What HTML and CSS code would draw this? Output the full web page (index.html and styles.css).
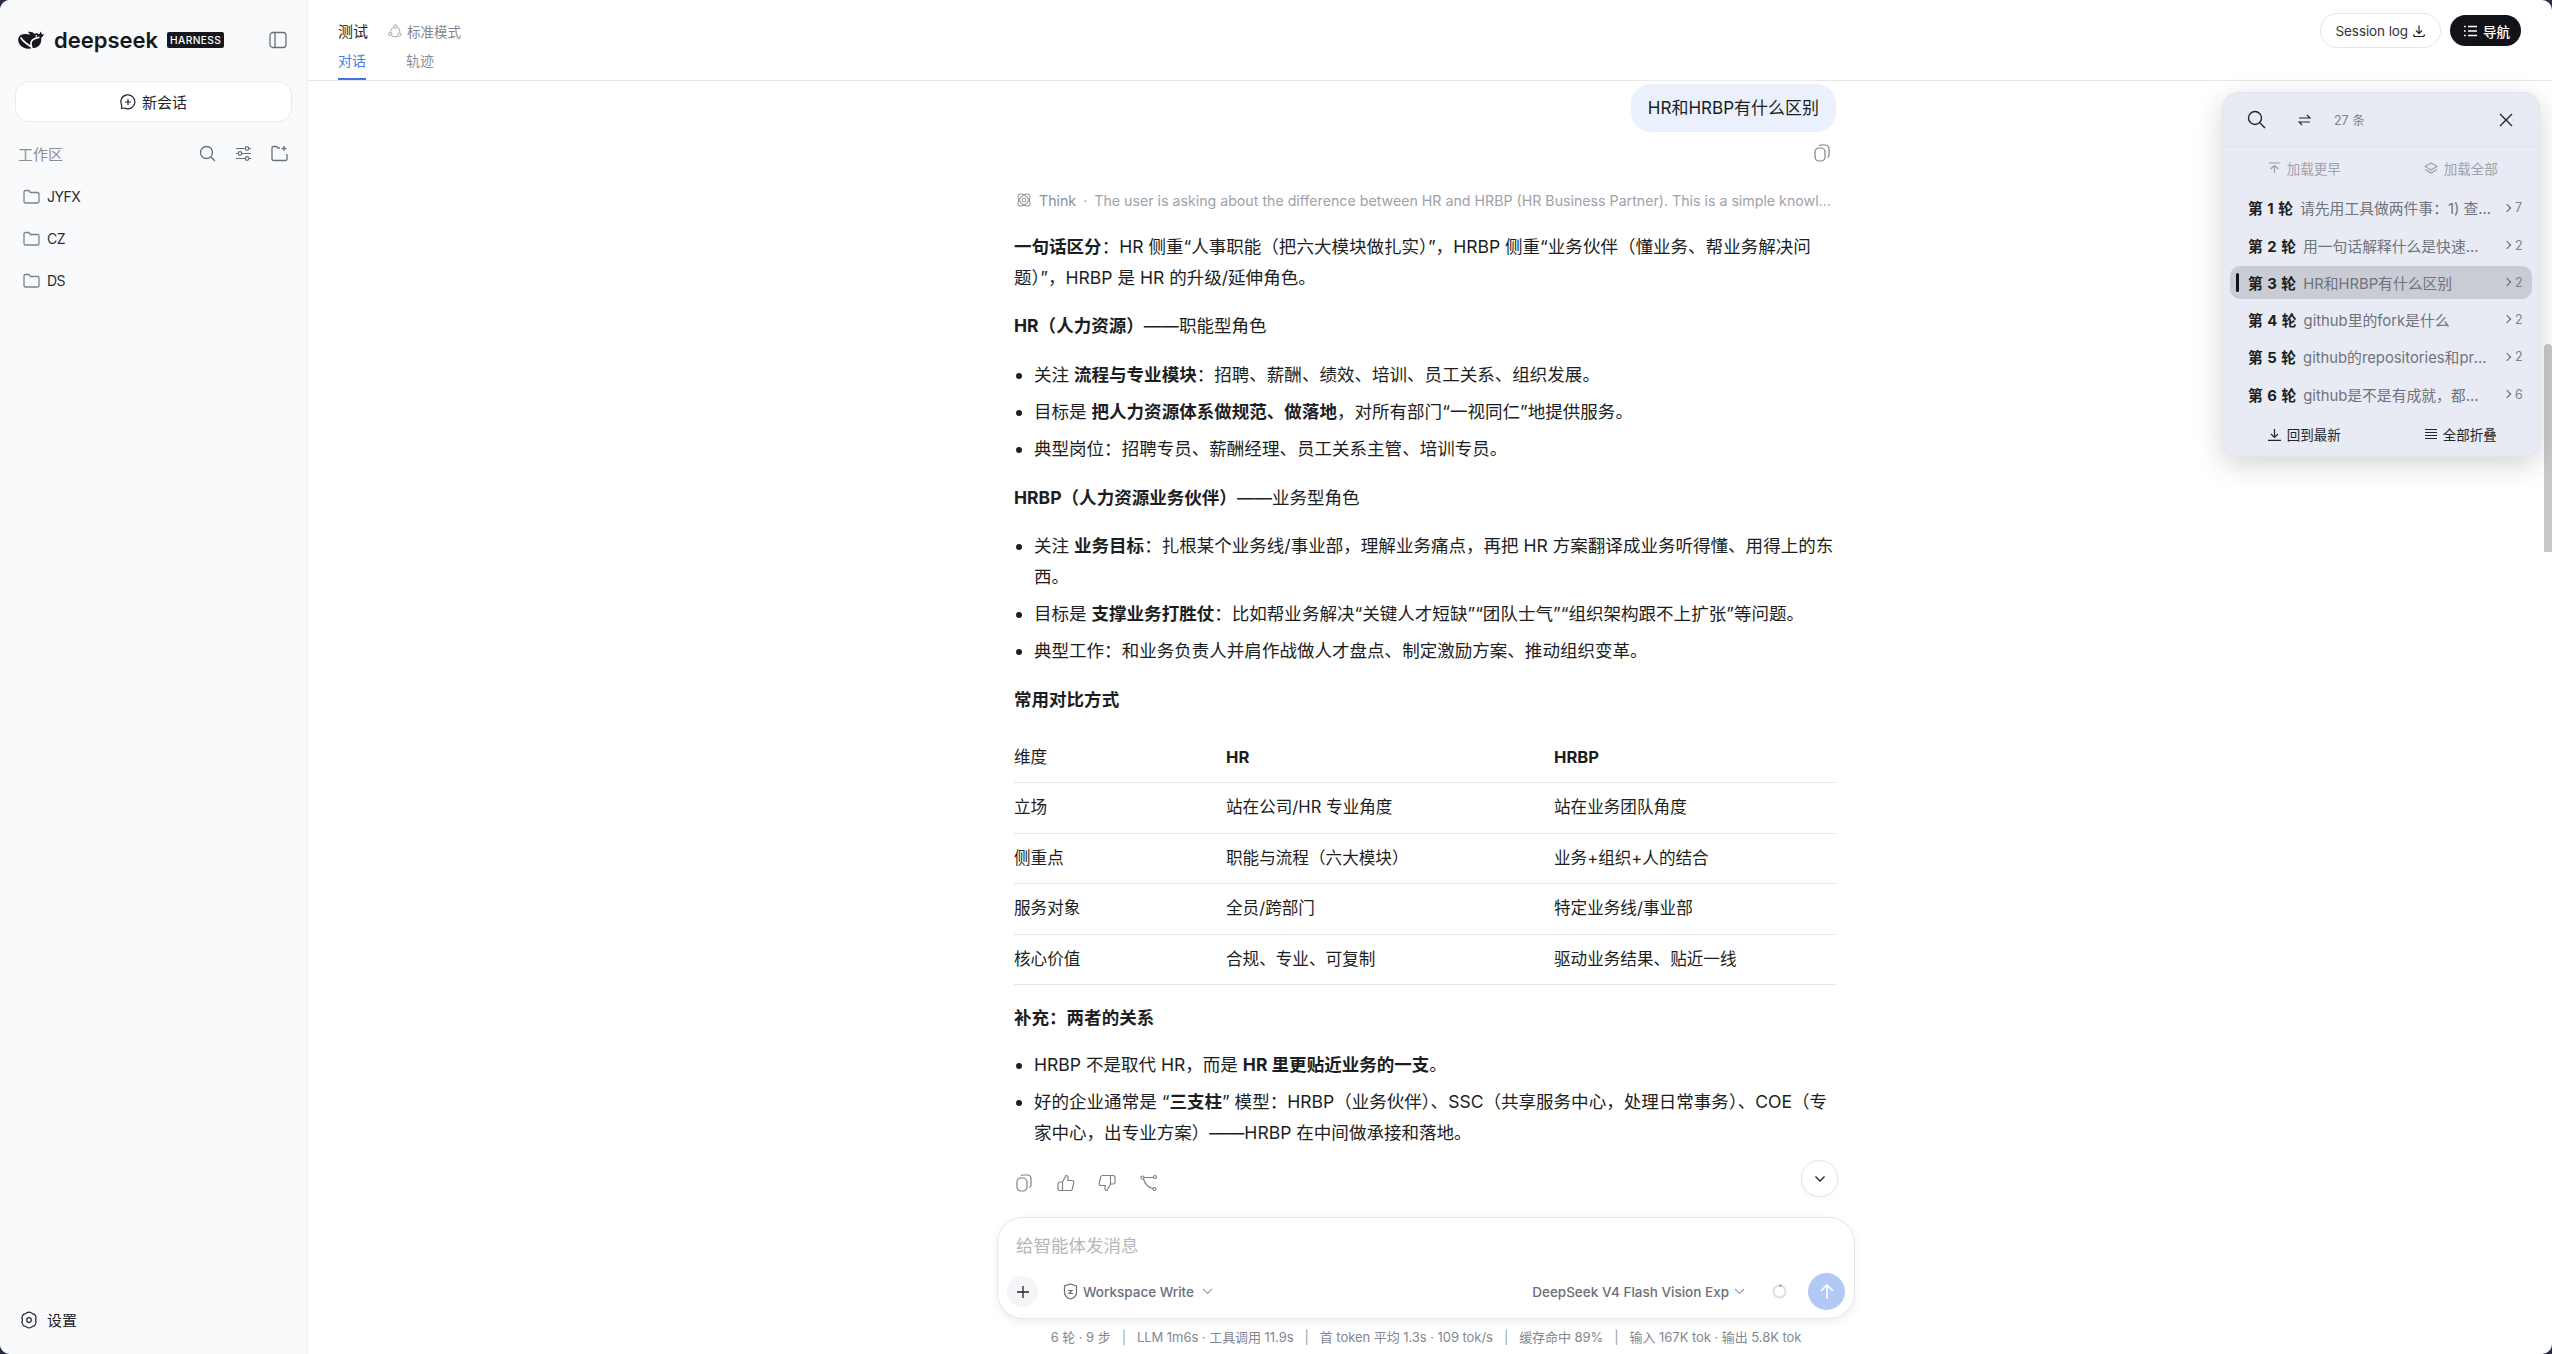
FILE: index.html
```html
<!DOCTYPE html>
<html lang="zh-CN">
<head>
	<meta charset="UTF-8">
	<title>DeepSeek Harness</title>
	<link rel="stylesheet" href="styles.css">
</head>
<body>
<div class="app">
	<aside class="side">
		<div class="brand">
			<svg class="whale" width="27" height="18" viewBox="0 0 27 18"><path fill="#16181d" d="M26.500 2.800c-.8.500-1.600.7-2.400.6-.3-.9-.8-1.900-1.500-2.900-.2 1.200-.7 2.100-1.400 2.800-1.300-1-3.100-1.300-4.800-.4C15.200 1.300 12.600.4 10 1c1 .8 1.700 1.700 2 2.700C9.200 2.700 5.400 2.500 2.800 4 .8 5.200 0 7.200.2 9.300c.3 4.300 4.200 8.200 9.600 8.400 1.700.1 3.100-.2 4.200-.8 3.800.5 7-1 8.600-4.700.6-1.500.9-3.600.5-5.300 1.500-.9 2.600-2.200 3-4.100z"/><path fill="none" stroke="#f9fafc" stroke-width="1.700" stroke-linecap="round" d="M3 7c2.500 3.800 5.800 6 10.800 9.300M13.800 16.300c-1.200-2.600-1.200-5.300.7-7.300 1.600-1.700 4-2.300 6.300-2.700"/><circle cx="18.300" cy="4.800" r=".9" fill="#f9fafc"/></svg>
			<span class="word">deepseek</span>
			<span class="badge">HARNESS</span>
			<svg class="collapse" width="18" height="18" viewBox="0 0 18 18" fill="none" stroke="#6b7078" stroke-width="1.300"><rect x="1" y="1.500" width="16" height="15" rx="3"/><path d="M6 1.500v15"/></svg>
		</div>
		<button class="new-chat">
			<svg width="16" height="16" viewBox="0 0 16 16" fill="none" stroke="#22252b" stroke-width="1.200"><path d="M4.500 14a7 7 0 1 0-2.800-2.800L1.500 14.500z" stroke-linejoin="round"/><path d="M8 5v6M5 8h6"/></svg>
			<span>新会话</span>
		</button>
		<div class="ws-head">
			<span class="ws-title">工作区</span>
			<div class="ws-tools">
				<svg width="17" height="17" viewBox="0 0 17 17" fill="none" stroke="#6b7078" stroke-width="1.300"><circle cx="7.500" cy="7.500" r="6"/><path d="M12 12l4 4"/></svg>
				<svg width="17" height="17" viewBox="0 0 17 17" fill="none" stroke="#6b7078" stroke-width="1.200"><path d="M1 3.500h9M14 3.500h2M1 8.500h2M7 8.500h9M1 13.500h9M14 13.500h2"/><circle cx="12" cy="3.500" r="1.800"/><circle cx="5" cy="8.500" r="1.800"/><circle cx="12" cy="13.500" r="1.800"/></svg>
				<svg width="17" height="17" viewBox="0 0 17 17" fill="none" stroke="#6b7078" stroke-width="1.300"><path d="M9 3H7L5.500 1.500H2.500a1.500 1.500 0 0 0-1.500 1.500v11a1.500 1.500 0 0 0 1.500 1.500h12a1.500 1.500 0 0 0 1.500-1.500V9"/><path d="M13 1v5M10.500 3.500h5"/></svg>
			</div>
		</div>
		<ul class="folders">
			<li><svg width="17" height="15" viewBox="0 0 17 15" fill="none" stroke="#7d828a" stroke-width="1.300"><path d="M1 3a1.500 1.500 0 0 1 1.500-1.500h3.300L7.500 3.500h7A1.500 1.500 0 0 1 16 5v7.500a1.500 1.500 0 0 1-1.500 1.500h-12A1.500 1.500 0 0 1 1 12.500z"/></svg>JYFX</li>
			<li><svg width="17" height="15" viewBox="0 0 17 15" fill="none" stroke="#7d828a" stroke-width="1.300"><path d="M1 3a1.500 1.500 0 0 1 1.500-1.500h3.300L7.500 3.500h7A1.500 1.500 0 0 1 16 5v7.500a1.500 1.500 0 0 1-1.500 1.500h-12A1.500 1.500 0 0 1 1 12.500z"/></svg>CZ</li>
			<li><svg width="17" height="15" viewBox="0 0 17 15" fill="none" stroke="#7d828a" stroke-width="1.300"><path d="M1 3a1.500 1.500 0 0 1 1.500-1.500h3.300L7.500 3.500h7A1.500 1.500 0 0 1 16 5v7.500a1.500 1.500 0 0 1-1.500 1.500h-12A1.500 1.500 0 0 1 1 12.500z"/></svg>DS</li>
		</ul>
		<div class="settings">
			<svg width="18" height="18" viewBox="0 0 18 18" fill="none" stroke="#2a2d33" stroke-width="1.300"><path d="M6.800 1.800c1.300-.8 3.100-.8 4.400 0l1.600 1c.4.200.9.300 1.400.3 1 .9 1.700 2.400 1.900 3.900-.3.400-.4.800-.4 1.300v1.400c0 .5.100.9.400 1.300-.2 1.500-.9 3-1.900 3.900-.5 0-1 .1-1.400.3l-1.600 1c-1.300.8-3.100.8-4.400 0l-1.600-1c-.4-.2-.9-.3-1.400-.3-1-.9-1.700-2.400-1.900-3.900.3-.4.400-.8.400-1.300V8.300c0-.5-.1-.9-.4-1.300.2-1.500.9-3 1.900-3.900.5 0 1-.1 1.400-.3z"/><circle cx="9" cy="9" r="2.300"/></svg>
			<span>设置</span>
		</div>
	</aside>

	<main class="main">
		<header class="top">
			<div class="top-left">
				<div class="title-row">
					<span class="title">测试</span>
					<span class="mode">
						<svg width="14" height="14" viewBox="0 0 14 14" fill="none" stroke="#9a9ea6" stroke-width="1"><circle cx="7.500" cy="2.500" r="1.600"/><circle cx="2.300" cy="10" r="1.600"/><circle cx="11.500" cy="10.500" r="1.600"/><path d="M5.600 2.800C4 4 3 5.700 2.500 7.600M9.300 2.800c1.500 1 2.300 3 2.500 5M3.900 11.800c1.500 1 3.500 1.200 5.600.6"/></svg>
						标准模式
					</span>
				</div>
				<nav class="tabs">
					<a class="tab on">对话</a>
					<a class="tab">轨迹</a>
				</nav>
			</div>
			<div class="top-right">
				<button class="log-btn">Session log
					<svg width="14" height="14" viewBox="0 0 14 14" fill="none" stroke="#22252b" stroke-width="1.200"><path d="M7 1.500v7.500M4 6.500 7 9.500l3-3M1.500 10.500c0 1.200.8 2 2 2h7c1.200 0 2-.8 2-2"/></svg>
				</button>
				<button class="nav-btn">
					<svg width="13" height="12" viewBox="0 0 13 12" fill="none" stroke="#fff" stroke-width="1.300"><path d="M0 1.500h1.800M0 6h1.800M0 10.500h1.800M4 1.500h9M4 6h9M4 10.500h9"/></svg>
					导航
				</button>
			</div>
		</header>

		<div class="body">
			<div class="chat">
				<div class="user-row"><div class="bubble">HR和HRBP有什么区别</div></div>
				<div class="user-tools">
					<svg width="16" height="18" viewBox="0 0 16 18" fill="none" stroke="#7d828a" stroke-width="1.200"><rect x="1" y="4" width="10" height="13" rx="4"/><path d="M5 1.500c.5-.5 1-.5 2-.5h4c2 0 4 1 4 4v6c0 1-.5 2-1.500 2.500"/></svg>
				</div>
				<div class="think">
					<svg width="16" height="16" viewBox="0 0 16 16" fill="none" stroke="#8f939b" stroke-width="1"><ellipse cx="8" cy="8" rx="7.500" ry="4" transform="rotate(45 8 8)"/><ellipse cx="8" cy="8" rx="7.500" ry="4" transform="rotate(-45 8 8)"/><circle cx="8" cy="8" r="1.800"/></svg>
					<span class="think-name">Think</span>
					<span class="think-dot">·</span>
					<span class="think-text">The user is asking about the difference between HR and HRBP (HR Business Partner). This is a simple knowledge question and I can answer it directly without tools.</span>
				</div>

				<div class="md">
					<p><b>一句话区分</b>：HR 侧重“人事职能（把六大模块做扎实）”，HRBP 侧重“业务伙伴（懂业务、帮业务解决问题）”，HRBP 是 HR 的升级/延伸角色。</p>
					<p class="h"><b>HR（人力资源）</b>——职能型角色</p>
					<ul>
						<li>关注 <b>流程与专业模块</b>：招聘、薪酬、绩效、培训、员工关系、组织发展。</li>
						<li>目标是 <b>把人力资源体系做规范、做落地</b>，对所有部门“一视同仁”地提供服务。</li>
						<li>典型岗位：招聘专员、薪酬经理、员工关系主管、培训专员。</li>
					</ul>
					<p class="h"><b>HRBP（人力资源业务伙伴）</b>——业务型角色</p>
					<ul>
						<li>关注 <b>业务目标</b>：扎根某个业务线/事业部，理解业务痛点，再把 HR 方案翻译成业务听得懂、用得上的东西。</li>
						<li>目标是 <b>支撑业务打胜仗</b>：比如帮业务解决“关键人才短缺”“团队士气”“组织架构跟不上扩张”等问题。</li>
						<li>典型工作：和业务负责人并肩作战做人才盘点、制定激励方案、推动组织变革。</li>
					</ul>
					<p class="h"><b>常用对比方式</b></p>
					<table>
						<thead>
							<tr><td class="c1">维度</td><th class="c2">HR</th><th class="c3">HRBP</th></tr>
						</thead>
						<tbody>
							<tr><td>立场</td><td>站在公司/HR 专业角度</td><td>站在业务团队角度</td></tr>
							<tr><td>侧重点</td><td>职能与流程（六大模块）</td><td>业务+组织+人的结合</td></tr>
							<tr><td>服务对象</td><td>全员/跨部门</td><td>特定业务线/事业部</td></tr>
							<tr><td>核心价值</td><td>合规、专业、可复制</td><td>驱动业务结果、贴近一线</td></tr>
						</tbody>
					</table>
					<p class="h h2"><b>补充：两者的关系</b></p>
					<ul>
						<li>HRBP 不是取代 HR，而是 <b>HR 里更贴近业务的一支</b>。</li>
						<li>好的企业通常是 “<b>三支柱</b>” 模型：HRBP（业务伙伴）、SSC（共享服务中心，处理日常事务）、COE（专家中心，出专业方案）——HRBP 在中间做承接和落地。</li>
					</ul>
				</div>

				<div class="actions">
					<svg width="18" height="18" viewBox="0 0 16 18" fill="none" stroke="#7d828a" stroke-width="1.200"><rect x="1" y="4" width="10" height="13" rx="4"/><path d="M5 1.500c.5-.5 1-.5 2-.5h4c2 0 4 1 4 4v6c0 1-.5 2-1.500 2.500"/></svg>
					<svg width="18" height="18" viewBox="0 0 18 18" fill="none" stroke="#7d828a" stroke-width="1.200"><path d="M5.500 8 9 1.500c1.300 0 2.200 1 2.200 2.300L10.800 6.500h4.400c1.100 0 1.900 1 1.600 2.100l-1.500 6.500c-.2.800-.9 1.400-1.700 1.400H5.500zM5.500 8H2.800C1.800 8 1 8.800 1 9.800v5c0 1 .8 1.700 1.800 1.700h2.700"/></svg>
					<svg width="18" height="18" viewBox="0 0 18 18" fill="none" stroke="#7d828a" stroke-width="1.200"><path d="M12.500 10 9 16.500c-1.300 0-2.200-1-2.200-2.300l.4-2.700H2.800c-1.100 0-1.900-1-1.600-2.100l1.500-6.500c.2-.8.900-1.400 1.700-1.400h8.100zM12.500 10h2.700c1 0 1.800-.8 1.800-1.800v-5c0-1-.8-1.700-1.800-1.700h-2.700"/></svg>
					<svg width="18" height="18" viewBox="0 0 18 18" fill="none" stroke="#7d828a" stroke-width="1.200"><circle cx="2.500" cy="3.500" r="1.500"/><circle cx="15" cy="3" r="1.500"/><circle cx="14.500" cy="15" r="1.500"/><path d="M4 3.500h9.500M3.500 5c1.500 5 5 8.500 9.500 9.500"/></svg>
				</div>
			</div>
		</div>

		<div class="composer">
			<div class="box">
				<div class="ph">给智能体发消息</div>
				<div class="ctl">
					<button class="plus"><svg width="14" height="14" viewBox="0 0 14 14" stroke="#22252b" stroke-width="1.300"><path d="M7 1v12M1 7h12"/></svg></button>
					<span class="perm">
						<svg width="15" height="17" viewBox="0 0 15 17" fill="none" stroke="#6b7078" stroke-width="1.200"><path d="M7.500 1 13.500 3v6c0 3.500-2.500 6-6 7-3.500-1-6-3.500-6-7V3z"/><path d="M5 7.500h4l-3 3h4"/></svg>
						Workspace Write
						<svg class="caret" width="11" height="7" viewBox="0 0 11 7" fill="none" stroke="#9a9ea6" stroke-width="1.100"><path d="M1 1l4.500 4.500L10 1"/></svg>
					</span>
					<span class="model">DeepSeek V4 Flash Vision Exp
						<svg width="11" height="7" viewBox="0 0 11 7" fill="none" stroke="#9a9ea6" stroke-width="1.100"><path d="M1 1l4.500 4.500L10 1"/></svg>
					</span>
					<svg class="ring" width="15" height="15" viewBox="0 0 15 15" fill="none" stroke-width="2"><circle cx="7.500" cy="7.500" r="6" stroke="#dcdfe4"/><path d="M7.500 1.500a6 6 0 0 1 2 .4" stroke="#8f939b"/></svg>
					<button class="send"><svg width="18" height="18" viewBox="0 0 18 18" fill="none" stroke="#fff" stroke-width="1.600"><path d="M9 16V2M3 8l6-6 6 6"/></svg></button>
				</div>
			</div>
			<div class="stats">
				<span>6 轮 · 9 步</span><i>|</i><span>LLM 1m6s · 工具调用 11.9s</span><i>|</i><span>首 token 平均 1.3s · 109 tok/s</span><i>|</i><span>缓存命中 89%</span><i>|</i><span>输入 167K tok · 输出 5.8K tok</span>
			</div>
		</div>

		<button class="to-bottom"><svg width="12" height="8" viewBox="0 0 12 8" fill="none" stroke="#22252b" stroke-width="1.400"><path d="M1.500 1.500 6 6l4.500-4.500"/></svg></button>
		<div class="thumb"></div>

		<section class="panel">
			<div class="p-head">
				<svg width="19" height="19" viewBox="0 0 19 19" fill="none" stroke="#22252b" stroke-width="1.400"><circle cx="8" cy="8" r="6.500"/><path d="M13 13l5 5"/></svg>
				<svg class="swap" width="13" height="12" viewBox="0 0 13 12" fill="none" stroke="#22252b" stroke-width="1.200"><path d="M1 4h11L9 1M12 8H1l3 3"/></svg>
				<span class="count">27 条</span>
				<svg class="close" width="14" height="14" viewBox="0 0 14 14" stroke="#22252b" stroke-width="1.400"><path d="M1 1l12 12M13 1 1 13"/></svg>
			</div>
			<div class="p-load">
				<span><svg width="13" height="12" viewBox="0 0 13 12" fill="none" stroke="#9a9ea6" stroke-width="1.200"><path d="M1 1h11M6.500 11V3.500M2.500 7l4-3.500 4 3.500"/></svg>加载更早</span>
				<span><svg width="14" height="12" viewBox="0 0 14 12" fill="none" stroke="#9a9ea6" stroke-width="1.200"><path d="M7 1l6 3.500L7 8 1 4.500zM1 7.500 7 11l6-3.500"/></svg>加载全部</span>
			</div>
			<ul class="turns">
				<li><b>第 1 轮</b><span class="q">请先用工具做两件事：1) 查看当前目录，2) 总结</span><span class="arr"></span><span class="n">7</span></li>
				<li><b>第 2 轮</b><span class="q">用一句话解释什么是快速排序算法的核心思想</span><span class="arr"></span><span class="n">2</span></li>
				<li class="cur"><b>第 3 轮</b><span class="q">HR和HRBP有什么区别</span><span class="arr"></span><span class="n">2</span></li>
				<li><b>第 4 轮</b><span class="q">github里的fork是什么</span><span class="arr"></span><span class="n">2</span></li>
				<li><b>第 5 轮</b><span class="q">github的repositories和projects有什么区别</span><span class="arr"></span><span class="n">2</span></li>
				<li><b>第 6 轮</b><span class="q">github是不是有成就，都有哪些成就</span><span class="arr"></span><span class="n">6</span></li>
			</ul>
			<div class="p-foot">
				<span><svg width="13" height="13" viewBox="0 0 13 13" fill="none" stroke="#22252b" stroke-width="1.200"><path d="M6.500 1v8M3 6l3.500 3.500L10 6M0 12.300h13"/></svg>回到最新</span>
				<span><svg width="12" height="12" viewBox="0 0 12 12" fill="none" stroke="#22252b" stroke-width="1.200"><path d="M0 1.500h12M0 4.500h12M0 7.500h12M0 10.500h12"/></svg>全部折叠</span>
			</div>
		</section>
	</main>
</div>
</body>
</html>
```

FILE: styles.css
```css
* { padding: 0; margin: 0; box-sizing: border-box; }
html, body { height: 100%; overflow: hidden; }
body { background: #2a2d45; color: #1c1e22; font-family: Inter, "Noto Sans CJK SC", sans-serif; font-size: 15px; }
li { list-style: none; }
button { font-family: inherit; border: none; background: none; color: inherit; }
svg { flex: none; display: block; }

.app { display: flex; height: 1354px; background: #fff; border-radius: 10px; overflow: hidden; }

/* left column */
.side { width: 308px; flex: none; background: #f9fafc; border-right: 1px solid #eef0f3; display: flex; flex-direction: column; padding: 0 15px; }
.brand { display: flex; align-items: center; height: 32px; margin-top: 24px; padding: 0 0 0 3px; }
.word { font-weight: 600; font-size: 22px; margin-left: 9px; color: #16181d; line-height: 32px; }
.badge { background: #16181d; color: #fff; border-radius: 2px; font-size: 10.200px; font-weight: 500; letter-spacing: .4px; padding: 0 3px; height: 16px; line-height: 16px; margin-left: 9px; }
.collapse { margin-left: auto; margin-right: 5px; }
.new-chat { margin-top: 25px; height: 41px; border: 1px solid #e8eaed; border-radius: 14px; background: #fff; display: flex; align-items: center; justify-content: center; gap: 6px; font-size: 15px; color: #22252b; }
.ws-head { display: flex; align-items: center; justify-content: space-between; margin-top: 19px; height: 24px; padding: 0 4px 0 3px; }
.ws-title { color: #8b8f97; font-size: 15px; }
.ws-tools { display: flex; gap: 19px; }
.folders { margin-top: 10px; }
.folders li { display: flex; align-items: center; gap: 7px; height: 42px; padding-left: 8px; font-size: 14px; letter-spacing: -.5px; color: #2a2d33; }
.settings { margin-top: auto; margin-bottom: 24px; display: flex; align-items: center; gap: 9px; padding-left: 5px; font-size: 15px; color: #22252b; }

/* main column */
.main { flex: 1; min-width: 0; display: flex; flex-direction: column; position: relative; }
.top { height: 81px; flex: none; border-bottom: 1px solid #e6e7ea; display: flex; justify-content: space-between; padding: 0 31px 0 30px; }
.top-left { display: flex; flex-direction: column; }
.title-row { display: flex; align-items: center; height: 24px; margin-top: 19px; gap: 20px; }
.title { font-size: 15px; color: #22252b; }
.mode { display: flex; align-items: center; gap: 5px; font-size: 13.500px; color: #83878f; }
.tabs { display: flex; gap: 40px; margin-top: 7px; }
.tab { height: 31px; line-height: 24px; font-size: 14px; color: #8b8f97; border-bottom: 2px solid transparent; }
.tab.on { color: #4a7ee8; border-bottom-color: #3f74e4; }
.top-right { display: flex; align-items: flex-start; gap: 9px; padding-top: 13px; }
.log-btn { height: 35px; padding: 0 14px 0 15px; border: 1px solid #e6e7ea; border-radius: 18px; background: #fff; display: flex; align-items: center; gap: 4px; font-size: 13.500px; letter-spacing: -.1px; color: #30333a; }
.nav-btn { height: 31px; margin-top: 2px; padding: 0 11px 0 14px; border-radius: 16px; background: #111318; color: #fff; display: flex; align-items: center; gap: 6px; font-size: 13.500px; font-weight: 500; }

.body { flex: 1; min-height: 0; overflow: hidden; padding-right: 10px; }
.chat { width: 822px; margin: 0 auto; }
.user-row { display: flex; justify-content: flex-end; padding-top: 3px; }
.bubble { height: 48px; line-height: 48px; padding: 0 17px; border-radius: 20px; background: #eaf1fd; font-size: 17px; white-space: nowrap; }
.user-tools { display: flex; justify-content: flex-end; padding: 12px 6px 0 0; height: 37px; }
.think { display: flex; align-items: center; height: 24px; margin-top: 19px; padding-left: 2px; font-size: 14.200px; color: #9ea2aa; }
.think-name { margin-left: 7px; color: #8b8f97; }
.think-dot { margin: 0 7px; }
.think-text { flex: 1; min-width: 0; overflow: hidden; white-space: nowrap; text-overflow: ellipsis; }

.md { font-size: 17.550px; line-height: 31px; margin-top: 19px; color: #1c1e22; }
.md b { font-weight: 700; }
.md .h { margin-top: 17px; }
.md ul + .h { margin-top: 18px; }
.md .h2 { margin-top: 17px; }
.md ul { margin-top: 18px; }
.md ul + .h + ul { margin-top: 17px; }
.md .h2 + ul { margin-top: 16px; }
.md ul li { list-style: disc; margin-left: 20px; margin-top: 6px; }
.md ul li:first-child { margin-top: 0; }
.md table { width: 822px; table-layout: fixed; border-collapse: collapse; margin-top: 17px; font-size: 16.600px; }
.md td, .md th { height: 50.500px; padding: 0; border-bottom: 1px solid #e6e7ea; text-align: left; font-weight: 400; vertical-align: middle; }
.md th { font-weight: 700; }
.md .c1 { width: 212px; }
.md .c2 { width: 328px; }

.actions { display: flex; align-items: center; gap: 23.500px; margin-top: 26px; padding-left: 1px; }

/* input */
.composer { flex: none; padding-right: 8px; display: flex; flex-direction: column; align-items: center; }
.box { width: 858px; height: 102px; border: 1px solid #e6e7ea; border-radius: 26px; background: #fff; box-shadow: 0 3px 10px rgba(0,0,0,.07); padding: 0 9px; }
.ph { height: 55px; line-height: 55px; padding-left: 9px; font-size: 17.500px; color: #b4b7bd; }
.ctl { display: flex; align-items: center; height: 37px; }
.plus { width: 31px; height: 31px; border-radius: 50%; background: #f4f5f7; display: flex; align-items: center; justify-content: center; }
.perm { display: flex; align-items: center; gap: 5px; margin-left: 25px; font-size: 13.500px; font-weight: 500; color: #6b7078; }
.perm .caret { margin-left: 3px; }
.model { display: flex; align-items: center; gap: 5px; margin-left: auto; font-size: 13.500px; font-weight: 500; color: #6b7078; }
.ring { margin-left: 27px; }
.send { width: 37px; height: 37px; border-radius: 50%; background: #b3c9f5; margin-left: 21px; display: flex; align-items: center; justify-content: center; }
.stats { height: 35px; display: flex; align-items: center; gap: 11px; font-size: 13px; letter-spacing: -.05px; color: #83878f; }
.stats i { font-style: normal; color: #9a9ea6; }

/* things over the page */
.to-bottom { position: absolute; left: 1493px; top: 1160px; width: 37px; height: 37px; border-radius: 50%; background: #fff; border: 1px solid #e6e7ea; box-shadow: 0 1px 4px rgba(0,0,0,.06); display: flex; align-items: center; justify-content: center; }
.thumb { position: absolute; right: 0; top: 344px; width: 8px; height: 208px; background: #c9c9c9; border-radius: 4px 4px 0 0; }
.panel { position: absolute; left: 1914px; top: 92px; width: 318px; height: 365px; background: #e8ebf3; border: 1px solid #e2e5ed; border-radius: 16px; box-shadow: 0 8px 28px rgba(0,0,0,.17); }
.p-head { display: flex; align-items: center; height: 54px; padding: 0 26px 0 24px; border-bottom: 1px solid #dfe2ea; }
.swap { margin-left: 32px; }
.count { margin-left: 23px; font-size: 12.500px; color: #7d828a; }
.close { margin-left: auto; }
.p-load, .p-foot { display: grid; grid-template-columns: 1fr 1fr; padding: 0 0 0 3px; font-size: 13.500px; }
.p-load { height: 42px; align-items: center; color: #9ea2aa; }
.p-load span, .p-foot span { display: flex; align-items: center; justify-content: center; gap: 6px; }
.turns { padding: 0 7px; }
.turns li { display: flex; align-items: center; height: 37.400px; padding: 0 9px 0 18px; font-size: 14.800px; position: relative; }
.turns b { flex: none; font-weight: 700; word-spacing: 1px; color: #1c1e22; }
.turns .q { flex: 1; min-width: 0; margin-left: 7px; overflow: hidden; white-space: nowrap; text-overflow: ellipsis; color: #6f737b; }
.turns .arr { flex: none; width: 6px; height: 6px; margin-left: 12px; border-top: 1.500px solid #5f636b; border-right: 1.500px solid #5f636b; transform: rotate(45deg); }
.turns .n { flex: none; margin-left: 5px; width: 8px; font-size: 12.500px; color: #7d828a; }
.turns .cur { background: #c9ccd5; border-radius: 10px; height: 33px; margin: 2px 0; }
.turns .cur::before { content: ""; position: absolute; left: 6px; top: 7px; width: 3px; height: 19px; border-radius: 2px; background: #111318; }
.p-foot { height: 43px; align-items: center; color: #22252b; }
```
